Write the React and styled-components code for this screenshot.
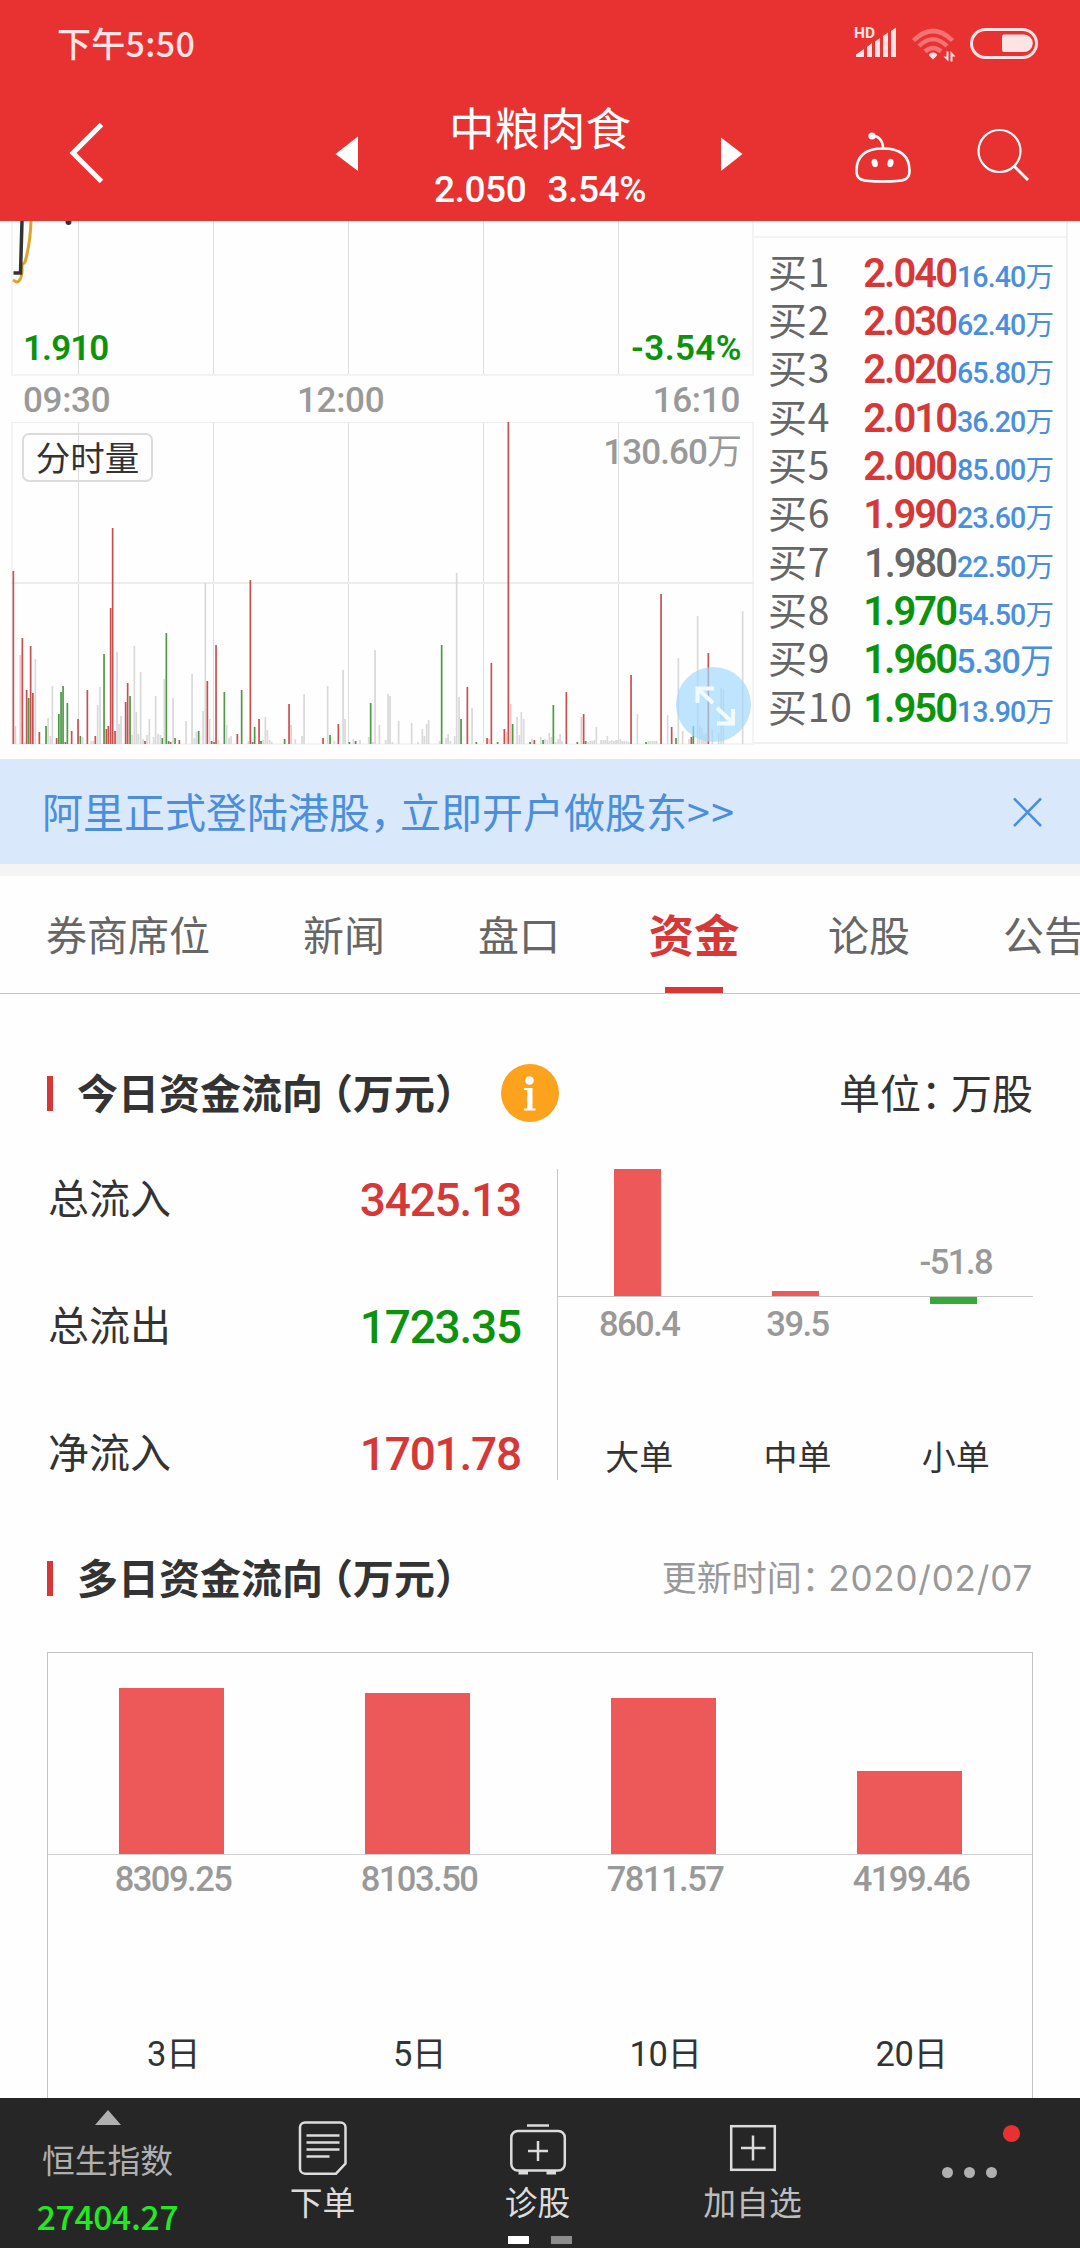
import React from 'react';
import styled, { createGlobalStyle } from 'styled-components';

const cjk = '"Noto Sans CJK SC", sans-serif';
const num = 'Roboto, "Noto Sans CJK SC", sans-serif';

const colors = {
  header: '#e83131',
  up: '#d63838',
  down: '#0c930c',
  flat: '#666666',
  blue: '#4a8fdd',
  text: '#333333',
  muted: '#999999',
  bar: '#ed5959',
  barDown: '#38a838',
};

const GlobalStyle = createGlobalStyle`
  * { box-sizing: border-box; }
  body {
    margin: 0;
    background: #fefefe;
    font-family: ${cjk};
    color: ${colors.text};
  }
  svg { display: block; flex: none; }
`;

const Screen = styled.div`
  width: 1080px;
  height: 2248px;
  display: flex;
  flex-direction: column;
  overflow: hidden;
  background: #fefefe;
  white-space: nowrap;
`;

/* header */

const Header = styled.header`
  height: 221px;
  flex: none;
  background: ${colors.header};
  color: #fff;
`;

const StatusBar = styled.div`
  height: 84px;
  padding: 2px 41px 0 57px;
  display: flex;
  justify-content: space-between;
  align-items: center;
`;

const Clock = styled.div`
  font-size: 34px;
  font-weight: 500;
  line-height: 82px;
  letter-spacing: 0.3px;
  color: #fde3e3;
`;

const NavBar = styled.nav`
  height: 137px;
  padding-left: 66px;
  display: flex;
  align-items: center;
`;

const PrevArrow = styled.svg`
  margin-left: 228px;
`;

const NextArrow = styled.svg`
  margin-left: 60px;
`;

const RobotSvg = styled.svg`
  margin-left: 104px;
`;

const SearchSvg = styled.svg`
  margin-left: 58px;
`;

const StockTitle = styled.div`
  width: 240px;
  height: 137px;
  margin-left: 60px;
  padding-top: 13px;
  text-align: center;
`;

const StockName = styled.div`
  font-size: 45.5px;
  line-height: 58px;
`;

const StockQuote = styled.div`
  margin-top: 4px;
  font: 500 37px/62px ${num};
  letter-spacing: -0.4px;
  display: flex;
  justify-content: center;
  gap: 21px;
`;

/* intraday chart and order book */

const Market = styled.section`
  height: 538px;
  flex: none;
  padding-left: 11px;
  display: flex;
`;

const Intraday = styled.div`
  width: 743px;
`;

const Pane = styled.div`
  position: relative;
  height: ${(p) => p.$height}px;
`;

const PaneSvg = styled.svg`
  position: absolute;
  left: 0;
  top: 0;
`;

const PriceRange = styled.div`
  position: relative;
  height: 155px;
  padding: 0 12px 7px 12px;
  display: flex;
  justify-content: space-between;
  align-items: flex-end;
  font: 600 35px/40px ${num};
  letter-spacing: -0.9px;
  color: ${colors.down};

  span:last-child { letter-spacing: 0.4px; }
`;

const TimeAxis = styled.div`
  height: 46px;
  padding: 0 14px 0 12px;
  display: flex;
  font: 500 35px/50px ${num};
  letter-spacing: -0.3px;
  color: ${colors.muted};

  span:first-child { width: 274px; }
  span:last-child { margin-left: auto; }
`;

const VolumeHead = styled.div`
  position: relative;
  padding: 11px 12px 0 11px;
  display: flex;
  justify-content: space-between;
`;

const VolumeType = styled.div`
  width: 131px;
  height: 49px;
  border: 2px solid #dcdcdc;
  border-radius: 7px;
  text-align: center;
  font-size: 34.5px;
  line-height: 42px;
`;

const VolumeMax = styled.div`
  font: 500 35px/40px ${num};
  letter-spacing: -0.9px;
  color: ${colors.muted};

  span { font-weight: 400; letter-spacing: 0; }
`;

const ExpandButton = styled.div`
  position: absolute;
  right: 3px;
  bottom: 2px;
  width: 75px;
  height: 75px;
  border-radius: 50%;
  background: rgba(163, 216, 254, 0.7);
`;

const OrderBook = styled.div`
  width: 314px;
  height: 523px;
  padding-top: 15px;
  border: solid #f0f0f0;
  border-width: 0 2px 2px 0;
`;

const OrderRows = styled.div`
  border-top: 2px solid #f3f3f3;
  padding: 7.6px 12px 0 14px;
`;

const OrderRow = styled.div`
  height: 48.37px;
  display: flex;
  align-items: baseline;
  line-height: 48.37px;
`;

const OrderLabel = styled.div`
  width: 93px;
  font-size: 39px;
  letter-spacing: 0.8px;
  color: ${colors.flat};
`;

const OrderPrice = styled.div`
  width: 95px;
  font: ${(p) => (p.$color === colors.flat ? 500 : 600)} 40px/40px ${num};
  letter-spacing: -2px;
  text-align: right;
  color: ${(p) => p.$color};
`;

const OrderVolume = styled.div`
  flex: 1;
  text-align: right;
  font: 500 ${(p) => (p.$large ? 34 : 28.6)}px/34px ${num};
  letter-spacing: -0.9px;
  color: ${colors.blue};

  span { font-weight: 400; letter-spacing: 0; }
`;

/* promo banner and tabs */

const Banner = styled.div`
  height: 117px;
  flex: none;
  padding: 0 38px 3px 42px;
  border-bottom: 12px solid #f4f4f4;
  background: #d9e8fb;
  color: ${colors.blue};
  display: flex;
  justify-content: space-between;
  align-items: center;
  font-size: 41px;
`;

const Chevrons = styled.span`
  letter-spacing: 1.5px;
`;

const CloseSvg = styled.svg`
  margin-top: 3px;
`;

/* full-width punctuation set on its half-width body, with a little air */
const Punct = styled.span`
  font-feature-settings: 'halt';
  padding-right: 0.23em;
`;

const OpenParen = styled.span`
  font-feature-settings: 'halt';
  padding-left: 0.23em;
`;

const Tabs = styled.div`
  height: 118px;
  flex: none;
  padding-left: 46px;
  border-bottom: 1px solid #c4c4c4;
  display: flex;
  gap: 93px;
`;

const Tab = styled.div`
  position: relative;
  flex: none;
  width: ${(p) => p.$chars * 41}px;
  display: flex;
  justify-content: center;
  font-size: ${(p) => (p.$active ? 45.5 : 41)}px;
  font-weight: ${(p) => (p.$active ? 700 : 400)};
  line-height: 115px;
  color: ${(p) => (p.$active ? colors.up : colors.flat)};

  &::after {
    content: '';
    display: ${(p) => (p.$active ? 'block' : 'none')};
    position: absolute;
    left: 12px;
    bottom: 0;
    width: 58px;
    height: 6px;
    background: ${colors.up};
  }
`;

/* money flow */

const Section = styled.section`
  flex: none;
  padding: ${(p) => p.$top}px 47px 0;
`;

const SectionHead = styled.div`
  height: 58px;
  display: flex;
  align-items: center;
`;

const Marker = styled.div`
  width: 6px;
  height: 35px;
  margin-right: 24px;
  background: ${colors.up};
`;

const SectionTitle = styled.h2`
  width: 377px;
  margin: 0;
  padding-bottom: 4px;
  font-size: 41px;
  line-height: 54px;
  font-weight: 700;
`;

const InfoBadge = styled.div`
  width: 58px;
  height: 58px;
  margin-left: 47px;
  border-radius: 50%;
  background: #fda21d;
`;

const Unit = styled.div`
  margin-left: auto;
  padding-bottom: 4px;
  font-size: 41px;
  line-height: 54px;
`;

const UpdateTime = styled.div`
  margin-left: auto;
  padding-bottom: 2px;
  font-size: 35px;
  line-height: 54px;
  color: ${colors.muted};
`;

const UpdateDate = styled.span`
  padding-left: 1px;
  font-family: Inter, sans-serif;
  letter-spacing: 0.8px;
`;

const FlowBody = styled.div`
  height: 311px;
  margin-top: 47px;
  display: flex;
`;

const FlowStats = styled.div`
  width: 510px;
  padding: 0 36px 0 1px;
  display: flex;
  flex-direction: column;
  gap: 73px;
`;

const FlowStat = styled.div`
  height: 54px;
  display: flex;
  justify-content: space-between;
  font-size: 41px;
  line-height: 54px;
`;

const FlowValue = styled.div`
  font: 500 46px/62px ${num};
  letter-spacing: -1.2px;
  color: ${(p) => p.$color};
`;

const OrderSizeChart = styled.div`
  flex: 1;
  border-left: 1px solid #c8c8c8;
  display: grid;
  grid-template-columns: repeat(3, 1fr);
`;

const SizeColumn = styled.div`
  display: flex;
  flex-direction: column;
`;

const AboveAxis = styled.div`
  height: 128px;
  border-bottom: 1px solid #c8c8c8;
  display: flex;
  flex-direction: column;
  align-items: center;
  justify-content: flex-end;
`;

const BelowAxis = styled.div`
  flex: 1;
  display: flex;
  flex-direction: column;
  align-items: center;
`;

const SizeBar = styled.div`
  width: 47px;
  background: ${(p) => (p.$down ? colors.barDown : colors.bar)};
`;

const ChartValue = styled.div`
  padding-left: 4px;
  font: 500 34.5px/${(p) => p.$line}px ${num};
  letter-spacing: -1.5px;
  color: ${colors.muted};
`;

const SizeLabel = styled.div`
  margin-top: auto;
  padding-left: 4px;
  font-size: 34px;
  line-height: 49px;
`;

const DaysChart = styled.div`
  height: 500px;
  margin-top: 45px;
  border: 1px solid #c4c4c4;
  display: grid;
  grid-template-columns: repeat(4, 1fr);
`;

const DayColumn = styled.div`
  display: flex;
  flex-direction: column;
  align-items: center;
`;

const DayPlot = styled.div`
  width: 100%;
  height: 202px;
  border-bottom: 1px solid #d0d0d0;
  display: flex;
  align-items: flex-end;
  justify-content: center;
`;

const DayBar = styled.div`
  width: 105px;
  background: ${colors.bar};
`;

const DayLabel = styled.div`
  margin-top: 126px;
  padding-left: 5px;
  font: 400 34.5px/48px ${num};
  letter-spacing: -0.5px;
`;

/* bottom toolbar */

const Content = styled.div`
  height: 1877px;
  flex: none;
  overflow: hidden;
`;

const Toolbar = styled.footer`
  position: relative;
  height: 150px;
  flex: none;
  background: #262626;
  display: grid;
  grid-template-columns: repeat(5, 215px);
`;

const IndexCell = styled.div`
  padding-top: 12px;
  display: flex;
  flex-direction: column;
  align-items: center;
  font-size: 32.8px;
  line-height: 42px;
  color: #b0b0b0;
`;

const IndexName = styled.div`
  margin-top: 13px;
`;

const IndexValue = styled.div`
  margin-top: 15px;
  font-size: 33.6px;
  font-weight: 500;
  letter-spacing: -0.3px;
  color: #22ea22;
`;

const Action = styled.div`
  padding-top: 23px;
  display: flex;
  flex-direction: column;
  align-items: center;
  gap: 5px;
  font-size: 32.8px;
  line-height: 42px;
  color: ${(p) => (p.$dim ? '#bdbdbd' : '#dcdcdc')};
`;

const Pager = styled.div`
  position: absolute;
  left: 508px;
  bottom: 4px;
  display: flex;
  gap: 22px;
`;

const PagerMark = styled.i`
  width: 21px;
  height: 8px;
  background: ${(p) => (p.$on ? '#fff' : '#8c8c8c')};
`;

const orders = [
  ['买1', '2.040', '16.40', colors.up],
  ['买2', '2.030', '62.40', colors.up],
  ['买3', '2.020', '65.80', colors.up],
  ['买4', '2.010', '36.20', colors.up],
  ['买5', '2.000', '85.00', colors.up],
  ['买6', '1.990', '23.60', colors.up],
  ['买7', '1.980', '22.50', colors.flat],
  ['买8', '1.970', '54.50', colors.down],
  ['买9', '1.960', '5.30', colors.down],
  ['买10', '1.950', '13.90', colors.down],
];

const tabs = ['券商席位', '新闻', '盘口', '资金', '论股', '公告'];

const flows = [
  ['总流入', '3425.13', colors.up],
  ['总流出', '1723.35', colors.down],
  ['净流入', '1701.78', colors.up],
];

const sizes = [
  { label: '大单', value: 860.4, height: 128 },
  { label: '中单', value: 39.5, height: 5 },
  { label: '小单', value: -51.8, height: 7 },
];

const days = [
  { label: '3日', value: '8309.25', height: 166 },
  { label: '5日', value: '8103.50', height: 161 },
  { label: '10日', value: '7811.57', height: 156 },
  { label: '20日', value: '4199.46', height: 83 },
];

// minute volume: x, height, kind (r = up, g = down, p = light up, n = flat)
const volumes = `2 173 r,4 18 p,9 89 p,11 106 r,13 2 p,15.3 54 r,17.3 46 g,19.3 98 r,21.5 51 r,24 85 n,28 12 r,34.7 18 g,36.7 26 n,39 8 n,41 58 n,
45.3 6 r,47.5 30 g,49.7 52 g,51.7 58 g,54 2 r,56 41 g,60.3 13 r,66.7 25 r,69 8 g,71.3 7 n,76 54 r,80 3 n,82 3 n,84 8 r,86.3 39 n,88.7 57 n,92.7 90 g,95 15 r,97 18 r,99.3 136 r,101.3 216 r,103.7 13 r,
105.7 92 n,107.7 20 n,109.7 28 n,114.3 42 r,116.3 61 r,118.7 48 g,120.7 9 n,123 98 n,125 32 n,127 10 n,129.3 72 n,131.7 5 n,133.7 3 r,135.7 9 n,138 25 n,142.3 7 n,144.3 48 n,146.7 10 n,149 9 n,
151 6 g,153 65 n,155 111 g,157.3 3 g,159.3 2 r,161.7 46 n,163.7 6 g,168 4 r,174.7 23 n,180.7 70 n,183 6 n,185 12 n,187.3 13 g,191.7 33 n,194 161 n,196 63 r,198.3 25 n,200.3 3 r,202.7 2 g,204.7 99 r,207 4 p,
213 52 g,215.3 19 n,217.7 6 n,219.7 8 n,226 10 r,230.3 54 g,237 3 n,239 164 r,241.3 2 r,243.3 17 g,247.7 25 r,249.7 3 g,251.7 4 n,254 27 n,256 14 n,258.3 4 n,260.3 2 n,
273.3 5 g,277.7 40 r,279.7 19 p,284 5 n,290.7 8 n,292.7 50 n,311.7 6 r,316.3 58 n,318.7 9 g,323 3 n,327 20 r,331.7 74 n,333.7 25 n,338 2 g,342 5 n,344.3 3 r,348.7 4 n,357.3 7 n,359.3 41 g,361.7 2 n,363.7 94 n,368 19 n,
374.3 4 n,376.7 50 n,378.7 48 n,381 2 n,387.3 23 n,400.3 21 n,406.7 2 n,411 15 n,413 8 n,415.3 20 n,417.3 24 n,428.3 3 n,430.3 99 g,434.7 6 n,436.7 10 n,439 3 n,443.3 8 n,445.3 171 n,447.7 47 n,449.7 25 g,
456 57 r,460.7 36 n,465 2 g,475.7 6 r,477.7 5 p,480 81 r,486.3 2 g,493 15 r,495 12 p,497 322 r,499.3 40 p,501.3 20 g,505.7 27 n,508 9 n,510 32 n,512.3 25 n,518.7 2 g,520.7 5 n,523 4 r,529.3 7 n,531.7 4 g,
533.7 5 n,536 4 n,538 11 n,540 7 n,542 39 g,544.3 2 n,546.7 5 n,548.7 10 n,550.7 3 n,555 52 r,566 2 g,570 27 p,572.3 30 r,574.3 3 g,576.7 2 n,579 3 n,581 3 n,583 4 n,585 17 n,589.7 4 n,592 4 n,594 4 n,
596 8 n,598 3 n,600.3 4 n,602.5 3 n,604.7 4 n,606.7 4 n,609 5 n,611 3 n,613 3 n,615.3 3 n,617.3 2 n,619.7 69 r,626 30 n,634.7 2 g,637 3 n,639 3 n,641.3 3 n,643.3 3 n,645.3 3 n,649.7 150 r,656.3 29 n,
660.3 17 r,664.7 6 g,667 86 n,671.3 13 n,677.7 5 n,680 7 r,682 18 g,686.3 128 n,688.3 19 n,690.7 16 n,692.7 9 n,694.7 11 n,697 91 r,701 14 n,707.3 11 n,709.7 56 n,712 55 n,731.3 133 n`
  .split(',')
  .map((item) => item.trim().split(' '));

const volumeColors = { r: '#c95050', g: '#4c9a48', p: '#f0c6c6', n: '#d9d9d9' };
const gridX = [67.5, 202.5, 337.5, 472.5, 607.5];

const StatusIcons = () => (
  <svg width="186" height="44" viewBox="853 22 186 44" fill="#fde3e3">
    <text x="854" y="39" fontFamily="Roboto, sans-serif" fontSize="15.500" fontWeight="700">HD</text>
    <path d="M856 58V55.500L864 50V58ZM867 58V48L872 44V58ZM875 58V42.500L880 39V58ZM883 58V37L888 33.500V58ZM891 58V32L896 28.500V58Z" />
    <g fill="none" stroke="#f77272" strokeWidth="4.500">
      <path d="M913.500 41.500Q933 22.500 952.500 41.500" />
      <path d="M919 47Q933 33.500 947 47" />
      <path d="M925 52.500Q933 45.500 941 52.500" />
    </g>
    <path d="M933 53.500q4 0 4 3l-4 4-4-4q0-3 4-3zM946.500 52.500h2v10l-5-5h3zM950.500 62.500h2v-5h3l-5-5.500z" />
    <rect x="971.500" y="30.500" width="65" height="28" rx="14" fill="none" stroke="#fde3e3" strokeWidth="3" />
    <path d="M1004 35.500h20a8.700 8.700 0 0 1 0 17.500h-20a2 2 0 0 1-2-2v-13.500a2 2 0 0 1 2-2z" />
  </svg>
);

const BackIcon = () => (
  <svg width="40" height="66" fill="none" stroke="#fff" strokeWidth="5">
    <path d="M35.500 4.500L7 33L35.500 61.500" />
  </svg>
);

const RobotIcon = () => (
  <RobotSvg width="66" height="60" viewBox="850 122 66 60" overflow="visible" fill="none" stroke="#fff" strokeWidth="2.600">
    <path d="M883 147.500c16 0 26.500 6 26.500 22.500 0 8.500-3.500 10.500-26.500 10.500s-26.500-2-26.500-10.500c0-16.500 10.500-22.500 26.500-22.500z" />
    <path d="M872 135c6-.5 11 4 11 12" />
    <circle cx="872" cy="135" r="2.300" fill="#fff" />
    <g fill="#fff" stroke="none">
      <ellipse cx="874.700" cy="162" rx="3" ry="4.200" transform="rotate(-12 874.700 162)" />
      <ellipse cx="890.500" cy="162" rx="3" ry="4.200" transform="rotate(12 890.500 162)" />
    </g>
  </RobotSvg>
);

const SearchIcon = () => (
  <SearchSvg width="58" height="58" viewBox="974 124 58 58" fill="none" stroke="#fff">
    <circle cx="999.500" cy="151" r="21" strokeWidth="2.200" />
    <path d="M1014 166L1028 180" strokeWidth="3" />
  </SearchSvg>
);

const VolumeBars = () => (
  <PaneSvg width="743" height="323">
    {gridX.map((x) => (
      <rect key={x} x={x - 0.5} y="0" width="1" height="323" fill="#dedede" />
    ))}
    <path d="M1 0V322H742V0" fill="none" stroke="#f4f4f4" strokeWidth="2" />
    <path d="M0 0.500H743" stroke="#eeeeee" />
    <path d="M0 161H743" stroke="#ececec" strokeWidth="2" />
    {volumes.map(([x, h, kind]) => (
      <rect key={x} x={Number(x) - 0.500} y={322 - h} width="1.700" height={h} fill={volumeColors[kind]} />
    ))}
  </PaneSvg>
);

const PriceLines = () => (
  <PaneSvg width="743" height="155" fill="none">
    {gridX.map((x) => (
      <rect key={x} x={x - 0.5} y="0" width="1" height="155" fill="#dedede" />
    ))}
    <path d="M1 0V154H742V0" stroke="#f3f3f3" strokeWidth="2" />
    <path d="M20 0C19.500 16 16 34 14 41L11 44V51C10 59 8 61 5.500 61L2 59" stroke="#e0a227" strokeWidth="3" />
    <path d="M11 0L9.500 52H2.500" stroke="#333" strokeWidth="3.500" />
    <circle cx="57.500" cy="1" r="3" fill="#333" />
  </PaneSvg>
);

const OrderIcon = () => (
  <svg width="60" height="54" viewBox="292 2121 60 54" fill="none" stroke="#dcdcdc" strokeWidth="2.500">
    <path d="M304 2122.500h35.500a5 5 0 0 1 5 5v36l-9.500 10.200h-31a5 5 0 0 1-5-5v-41.200a5 5 0 0 1 5-5z" />
    <path d="M305.500 2135.500h33M305.500 2142.500h33M305.500 2149.500h33M305.500 2156.500h23" />
  </svg>
);

const DiagnoseIcon = () => (
  <svg width="60" height="54" viewBox="507 2121 60 54" fill="none" stroke="#dcdcdc" strokeWidth="2.500">
    <path d="M526 2125.500h22" />
    <rect x="510.300" y="2131" width="53.500" height="39.500" rx="6.500" />
    <path d="M527 2151h20M537 2141v20" />
    <path d="M517.500 2172.700h9.500M545.500 2172.700h9.500" strokeWidth="3.500" />
  </svg>
);

const AddIcon = () => (
  <svg width="60" height="54" viewBox="722 2121 60 54" fill="none" stroke="#dcdcdc" strokeWidth="2.500">
    <rect x="730.200" y="2126.200" width="43.600" height="43.600" />
    <path d="M740 2148h24.500M752 2135.500v25" />
  </svg>
);

const MoreIcon = () => (
  <svg width="215" height="80" viewBox="860 2121 215 80" fill="#b0b0b0">
    <circle cx="947.500" cy="2172.500" r="5.500" />
    <circle cx="969.500" cy="2172.500" r="5.500" />
    <circle cx="991.500" cy="2172.500" r="5.500" />
    <circle cx="1011.500" cy="2133.500" r="8.600" fill="#e83131" />
  </svg>
);

const FlowTitle = ({ name }) => (
  <SectionTitle>
    {name}
    <OpenParen>（</OpenParen>万元）
  </SectionTitle>
);

const App = () => (
  <Screen>
    <GlobalStyle />
    <Header>
      <StatusBar>
        <Clock>下午5:50</Clock>
        <StatusIcons />
      </StatusBar>
      <NavBar>
        <BackIcon />
        <PrevArrow width="26" height="36" fill="#fff"><path d="M1.500 19L24 1.500V36z" /></PrevArrow>
        <StockTitle>
          <StockName>中粮肉食</StockName>
          <StockQuote>
            <span>2.050</span>
            <span>3.54%</span>
          </StockQuote>
        </StockTitle>
        <NextArrow width="26" height="36" fill="#fff"><path d="M1 2.500V36L22.500 19z" /></NextArrow>
        <RobotIcon />
        <SearchIcon />
      </NavBar>
    </Header>

    <Content>
      <Market>
        <Intraday>
          <Pane $height={155}>
            <PriceLines />
            <PriceRange>
              <span>1.910</span>
              <span>-3.54%</span>
            </PriceRange>
          </Pane>
          <TimeAxis>
            <span>09:30</span>
            <span>12:00</span>
            <span>16:10</span>
          </TimeAxis>
          <Pane $height={322}>
            <VolumeBars />
            <VolumeHead>
              <VolumeType>分时量</VolumeType>
              <VolumeMax>130.60<span>万</span></VolumeMax>
            </VolumeHead>
            <ExpandButton>
              <svg width="75" height="75" fill="none" stroke="#f1fbff" strokeWidth="4">
                <path d="M38 21.500H21.500V36M22 22L37 36M41 41L56 55M57 42V56.500H41" />
              </svg>
            </ExpandButton>
          </Pane>
        </Intraday>
        <OrderBook>
          <OrderRows>
            {orders.map(([label, price, volume, color]) => (
              <OrderRow key={label}>
                <OrderLabel>{label}</OrderLabel>
                <OrderPrice $color={color}>{price}</OrderPrice>
                <OrderVolume $large={volume.length < 5}>{volume}<span>万</span></OrderVolume>
              </OrderRow>
            ))}
          </OrderRows>
        </OrderBook>
      </Market>

      <Banner>
        <div>阿里正式登陆港股<Punct>，</Punct>立即开户做股东<Chevrons>&gt;&gt;</Chevrons></div>
        <CloseSvg width="29" height="30" stroke={colors.blue} strokeWidth="2.500">
          <path d="M1 1.500L28 29M28 1.500L1 29" />
        </CloseSvg>
      </Banner>

      <Tabs>
        {tabs.map((tab) => (
          <Tab key={tab} $chars={tab.length} $active={tab === '资金'}>{tab}</Tab>
        ))}
      </Tabs>

      <Section $top={70}>
        <SectionHead>
          <Marker />
          <FlowTitle name="今日资金流向" />
          <InfoBadge>
            <svg width="58" height="58" fill="#fff">
              <circle cx="28.500" cy="16.500" r="4.300" />
              <path d="M23 24h8.500v20.500h3v2h-11.500v-2h3.200v-18.500h-3.200z" />
            </svg>
          </InfoBadge>
          <Unit>单位<Punct>：</Punct>万股</Unit>
        </SectionHead>
        <FlowBody>
          <FlowStats>
            {flows.map(([label, value, color]) => (
              <FlowStat key={label}>
                {label}
                <FlowValue $color={color}>{value}</FlowValue>
              </FlowStat>
            ))}
          </FlowStats>
          <OrderSizeChart>
            {sizes.map(({ label, value, height }) => (
              <SizeColumn key={label}>
                <AboveAxis>
                  {value < 0
                    ? <ChartValue $line={68}>{value}</ChartValue>
                    : <SizeBar style={{ height }} />}
                </AboveAxis>
                <BelowAxis>
                  {value < 0
                    ? <SizeBar $down style={{ height }} />
                    : <ChartValue $line={54}>{value}</ChartValue>}
                  <SizeLabel>{label}</SizeLabel>
                </BelowAxis>
              </SizeColumn>
            ))}
          </OrderSizeChart>
        </FlowBody>
      </Section>

      <Section $top={69}>
        <SectionHead>
          <Marker />
          <FlowTitle name="多日资金流向" />
          <UpdateTime>更新时间<Punct>：</Punct><UpdateDate>2020/02/07</UpdateDate></UpdateTime>
        </SectionHead>
        <DaysChart>
          {days.map(({ label, value, height }) => (
            <DayColumn key={label}>
              <DayPlot>
                <DayBar style={{ height }} />
              </DayPlot>
              <ChartValue $line={49}>{value}</ChartValue>
              <DayLabel>{label}</DayLabel>
            </DayColumn>
          ))}
        </DaysChart>
      </Section>
    </Content>

    <Toolbar>
      <IndexCell>
        <svg width="26" height="15" fill="#b0b0b0"><path d="M0 15L13 0L26 15z" /></svg>
        <IndexName>恒生指数</IndexName>
        <IndexValue>27404.27</IndexValue>
      </IndexCell>
      <Action>
        <OrderIcon />
        下单
      </Action>
      <Action>
        <DiagnoseIcon />
        诊股
      </Action>
      <Action $dim>
        <AddIcon />
        加自选
      </Action>
      <Action>
        <MoreIcon />
      </Action>
      <Pager>
        <PagerMark $on />
        <PagerMark />
      </Pager>
    </Toolbar>
  </Screen>
);

export default App;
